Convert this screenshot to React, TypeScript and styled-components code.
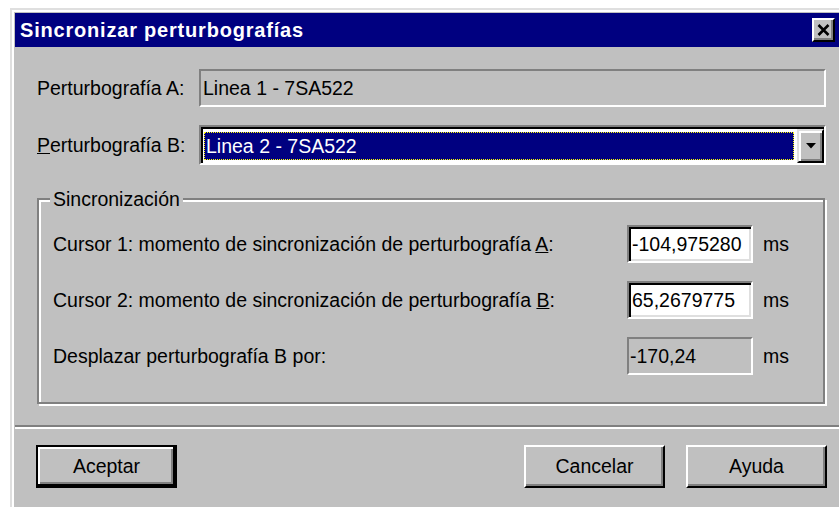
import React from 'react';
import styled, {createGlobalStyle} from 'styled-components';

const GlobalStyle = createGlobalStyle`
  html, body {
    margin: 0;
    padding: 0;
    background: #fff;
    overflow: hidden;
  }

  body {
    font-family: "Liberation Sans", Arial, sans-serif;
    font-size: 19.5px;
    color: #000;
  }
`

// the dialog runs on past the right edge of the page
const Window = styled.div`
  box-sizing: border-box;
  width: 840px;
  margin: 8px 0 0 10px;
  border-top: 2px solid #dfdfdf;
  border-left: 2px solid #dfdfdf;
  padding: 3px 0 0 3px;
  box-shadow: inset 2px 2px 0 #fff;
  background: #c0c0c0;
`

const TitleBar = styled.div`
  height: 34px;
  background: #000080;
  display: flex;
  align-items: center;
  justify-content: space-between;
  padding: 0 15px 0 5px;
`

const Title = styled.span`
  color: #fff;
  font-weight: bold;
  font-size: 20px;
  letter-spacing: 0.8px;
`

const RaisedBox = styled.div`
  box-sizing: border-box;
  background: #c0c0c0;
  border-style: solid;
  border-width: 2px;
  border-color: #fff #000 #000 #fff;
  box-shadow: inset -2px -2px 0 #808080;
  display: flex;
  align-items: center;
  justify-content: center;
`

const CloseButton = styled(RaisedBox)`
  width: 23px;
  height: 24px;
`

const TopSection = styled.div`
  padding: 22px 24px 21px 22px;
  display: flex;
  flex-direction: column;
`

const FieldRow = styled.div<{ $gap?: number }>`
  display: flex;
  align-items: center;
  margin-top: ${p => p.$gap ?? 0}px;
`

const Label = styled.label`
  width: 162px;
  flex-shrink: 0;
  white-space: nowrap;
`

const StaticField = styled.div`
  flex: 1;
  box-sizing: border-box;
  height: 38px;
  border-style: solid;
  border-width: 2px;
  border-color: #808080 #fff #fff #808080;
  padding-left: 2px;
  display: flex;
  align-items: center;
`

const Combo = styled.div`
  flex: 1;
  box-sizing: border-box;
  height: 40px;
  border-style: solid;
  border-width: 2px;
  border-color: #808080 #fff #fff #808080;
  box-shadow: inset 2px 2px 0 #000;
  padding: 2px 0 0 2px;
  background: #fff;
  display: flex;
`

const Selection = styled.div`
  flex: 1;
  margin: 3px 3px 3px 1px;
  background: #000080;
  border: 1px dotted #ffff00;
  color: #fff;
  padding-left: 1px;
  display: flex;
  align-items: center;
`

const DropButton = styled(RaisedBox)`
  width: 27px;
  border-color: #dfdfdf #000 #000 #dfdfdf;
  box-shadow: inset 2px 2px 0 #fff, inset -2px -2px 0 #808080;
`

const GroupBox = styled.fieldset`
  margin: 23px 1px 0 0;
  padding: 15px 0 27px 14px;
  border: 2px solid #808080;
  box-shadow: inset 2px 2px 0 #fff, 2px 2px 0 #fff;
  min-width: 0;
`

const Legend = styled.legend`
  margin-left: -3px;
  padding: 0 3px;
  line-height: 22px;
  background: #c0c0c0;
`

const GroupRows = styled.div`
  display: flex;
  flex-direction: column;
  gap: 18px;
`

const ValueRow = styled.div`
  display: grid;
  grid-template-columns: 574px 126px auto;
  align-items: center;
`

const ValueBox = styled.div<{ $editable?: boolean }>`
  box-sizing: border-box;
  height: 38px;
  border-style: solid;
  border-width: 2px;
  border-color: #808080 #fff #fff #808080;
  box-shadow: ${p => p.$editable ? 'inset 2px 2px 0 #000, inset -2px -2px 0 #dfdfdf' : 'none'};
  background: ${p => p.$editable ? '#fff' : '#c0c0c0'};
  padding-left: ${p => p.$editable ? 3 : 1}px;
  display: flex;
  align-items: center;
  white-space: nowrap;
  overflow: hidden;
`

const Unit = styled.span`
  margin-left: 10px;
`

const Separator = styled.div`
  height: 2px;
  background: #808080;
  border-bottom: 2px solid #fff;
`

const ButtonRow = styled.div`
  display: flex;
  gap: 21px;
  padding: 16px 23px 20px 21px;
`

const Button = styled(RaisedBox)<{ $default?: boolean }>`
  width: 141px;
  height: 43px;
  ${p => p.$default && `
    border: 2px solid #000;
    box-shadow: inset -2px -2px 0 #000, inset 2px 2px 0 #fff, inset -4px -4px 0 #808080;
  `}
`

const Spacer = styled.div`
  flex: 1;
`

const CloseIcon = () => (
    <svg width="13" height="12" viewBox="0 0 13 12">
        <path d="M1.5 1 L11.5 11 M11.5 1 L1.5 11" stroke="#000" strokeWidth="2.6"/>
    </svg>
)

const ArrowIcon = () => (
    <svg width="10" height="6" viewBox="0 0 10 6">
        <polygon points="0,0 10,0 5,5.5" fill="#000"/>
    </svg>
)

const App = () => {
    const values = [
        {label: <>Cursor 1: momento de sincronización de perturbografía <u>A</u>:</>, value: '-104,975280', editable: true},
        {label: <>Cursor 2: momento de sincronización de perturbografía <u>B</u>:</>, value: '65,2679775', editable: true},
        {label: <>Desplazar perturbografía B por:</>, value: '-170,24', editable: false},
    ]

    return (<>
        <GlobalStyle/>
        <Window>
            <TitleBar>
                <Title>Sincronizar perturbografías</Title>
                <CloseButton><CloseIcon/></CloseButton>
            </TitleBar>
            <TopSection>
                <FieldRow>
                    <Label>Perturbografía A:</Label>
                    <StaticField>Linea 1 - 7SA522</StaticField>
                </FieldRow>
                <FieldRow $gap={18}>
                    <Label><u>P</u>erturbografía B:</Label>
                    <Combo>
                        <Selection>Linea 2 - 7SA522</Selection>
                        <DropButton><ArrowIcon/></DropButton>
                    </Combo>
                </FieldRow>
                <GroupBox>
                    <Legend>Sincronización</Legend>
                    <GroupRows>
                        {values.map((row, i) => (
                            <ValueRow key={i}>
                                <span>{row.label}</span>
                                <ValueBox $editable={row.editable}>{row.value}</ValueBox>
                                <Unit>ms</Unit>
                            </ValueRow>
                        ))}
                    </GroupRows>
                </GroupBox>
            </TopSection>
            <Separator/>
            <ButtonRow>
                <Button $default>Aceptar</Button>
                <Spacer/>
                <Button>Cancelar</Button>
                <Button>Ayuda</Button>
            </ButtonRow>
        </Window>
    </>);
};

export default App;
